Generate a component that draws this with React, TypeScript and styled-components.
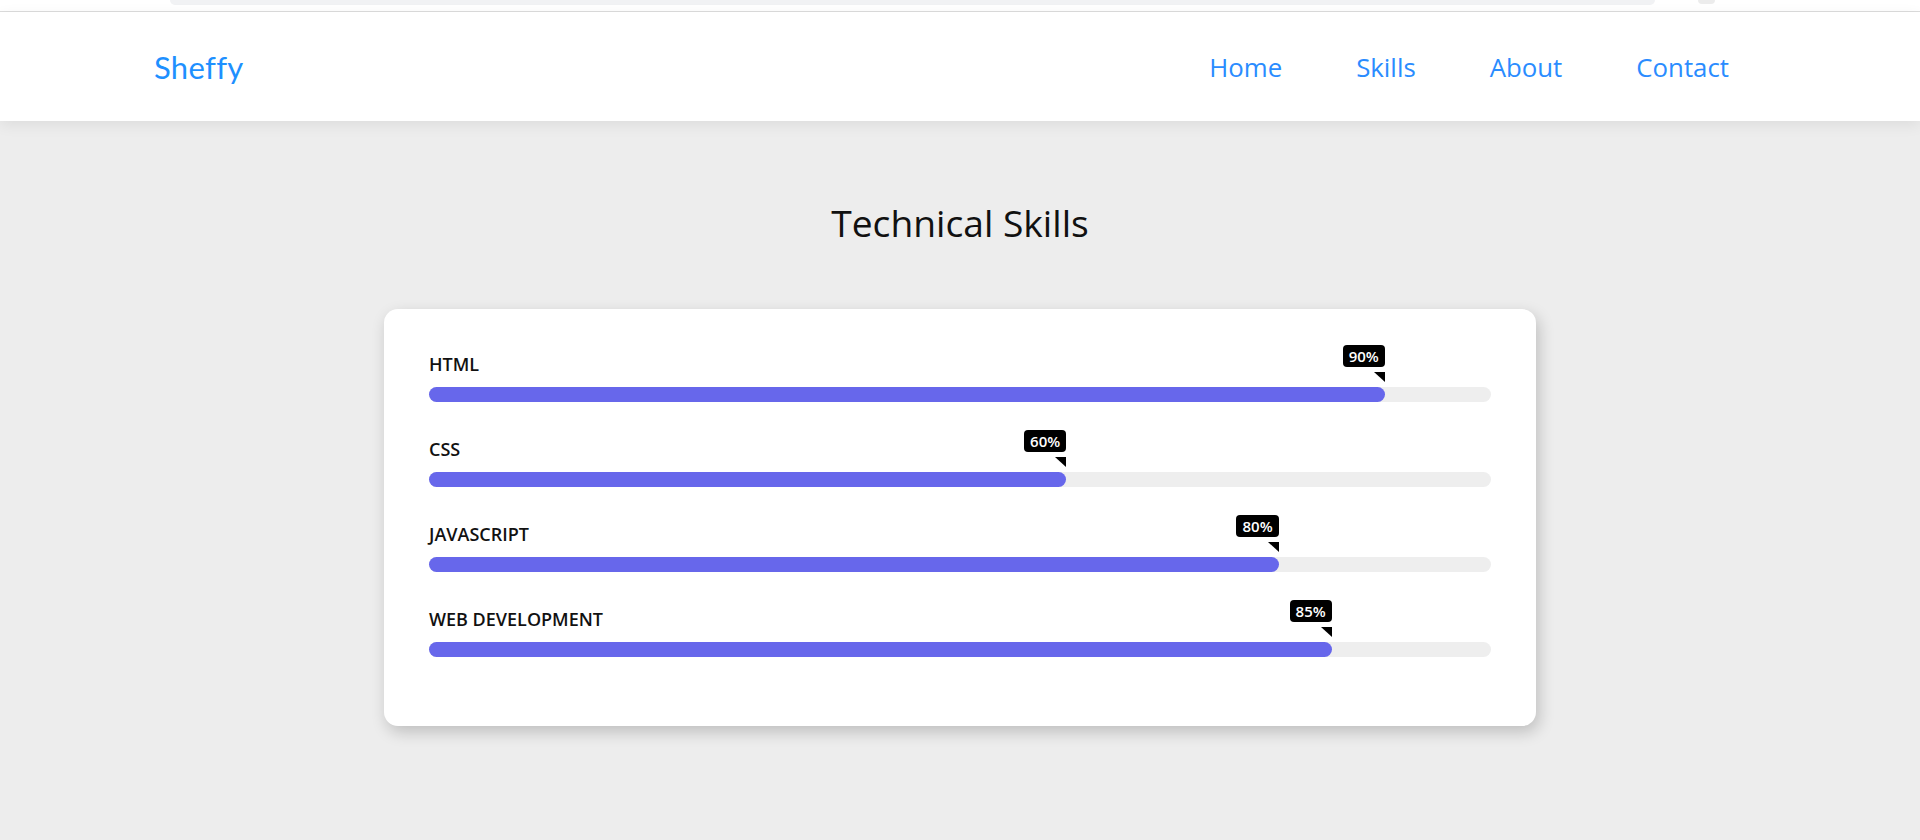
import React from "react";
import styled, { createGlobalStyle } from "styled-components";

const GlobalStyle = createGlobalStyle`
  html, body {
    margin: 0;
    padding: 0;
    background: #ededed;
    font-family: "Open Sans", "Noto Sans", sans-serif;
  }
  * { box-sizing: border-box; }
`;

const Page = styled.div`
  min-height: 840px;
  background: #ededed;
`;

const TopStrip = styled.div`
  height: 12px;
  background: #ffffff;
  border-bottom: 1px solid #dcdcdc;
  display: flex;
  align-items: flex-start;
  padding-left: 170px;
`;

const SearchEdge = styled.div`
  width: 1485px;
  height: 5px;
  background: #f1f2f4;
  border-radius: 0 0 8px 8px;
`;

const ScrollNub = styled.div`
  width: 17px;
  height: 4px;
  margin-left: 43px;
  background: #ececec;
  border-radius: 0 0 5px 5px;
`;

const Header = styled.header`
  position: relative;
  height: 109px;
  background: #ffffff;
  display: flex;
  align-items: center;
  justify-content: space-between;
  padding: 0 191px 0 154px;
  box-shadow: 0 4px 14px rgba(0, 0, 0, 0.07);
`;

const Logo = styled.div`
  font-family: "Lato", "Open Sans", sans-serif;
  font-size: 31px;
  letter-spacing: 0.3px;
  color: #1e90ff;
  margin-top: 1px;
`;

const Nav = styled.nav`
  display: flex;
  gap: 74px;
`;

const NavLink = styled.a`
  font-size: 25.8px;
  color: #2a8cff;
  text-decoration: none;
  cursor: pointer;
`;

const Main = styled.main`
  display: flex;
  flex-direction: column;
  align-items: center;
  padding-top: 76px;
`;

const Title = styled.h1`
  margin: 0 0 61px;
  font-size: 37.2px;
  font-weight: 400;
  color: #111111;
  line-height: normal;
`;

const Card = styled.section`
  width: 1152px;
  background: #ffffff;
  border-radius: 14px;
  padding: 43px 45px 69px;
  box-shadow: 3px 6px 16px rgba(0, 0, 0, 0.2);
  display: flex;
  flex-direction: column;
  gap: 35px;
`;

const Row = styled.div`
  display: flex;
  flex-direction: column;
  gap: 11px;
`;

const Label = styled.div`
  font-size: 18px;
  line-height: 24px;
  font-weight: 600;
  color: #111111;
  text-transform: uppercase;
`;

const Track = styled.div`
  height: 15px;
  border-radius: 8px;
  background: #eeeeee;
`;

const Fill = styled.div`
  position: relative;
  height: 100%;
  border-radius: 8px;
  background: #6767eb;
`;

const Tip = styled.div`
  position: absolute;
  right: 0;
  bottom: calc(100% + 5px);
  display: flex;
  flex-direction: column;
  align-items: flex-end;
  gap: 5px;
`;

const TipBox = styled.span`
  display: block;
  background: #000000;
  color: #ffffff;
  font-size: 15px;
  font-weight: 600;
  line-height: 22px;
  padding: 0 6px;
  border-radius: 4px;
`;

const TipArrow = styled.span`
  display: block;
  width: 0;
  height: 0;
  border-top: 10px solid #000000;
  border-left: 11px solid transparent;
`;

const skills = [
  { name: "HTML", value: 90 },
  { name: "CSS", value: 60 },
  { name: "JavaScript", value: 80 },
  { name: "Web Development", value: 85 },
];

export default function App() {
  return (
    <>
      <GlobalStyle />
      <Page>
        <TopStrip>
          <SearchEdge />
          <ScrollNub />
        </TopStrip>
        <Header>
          <Logo>Sheffy</Logo>
          <Nav>
            <NavLink>Home</NavLink>
            <NavLink>Skills</NavLink>
            <NavLink>About</NavLink>
            <NavLink>Contact</NavLink>
          </Nav>
        </Header>
        <Main>
          <Title>Technical Skills</Title>
          <Card>
            {skills.map((s) => (
              <Row key={s.name}>
                <Label>{s.name}</Label>
                <Track>
                  <Fill style={{ width: `${s.value}%` }}>
                    <Tip>
                      <TipBox>{s.value}%</TipBox>
                      <TipArrow />
                    </Tip>
                  </Fill>
                </Track>
              </Row>
            ))}
          </Card>
        </Main>
      </Page>
    </>
  );
}
